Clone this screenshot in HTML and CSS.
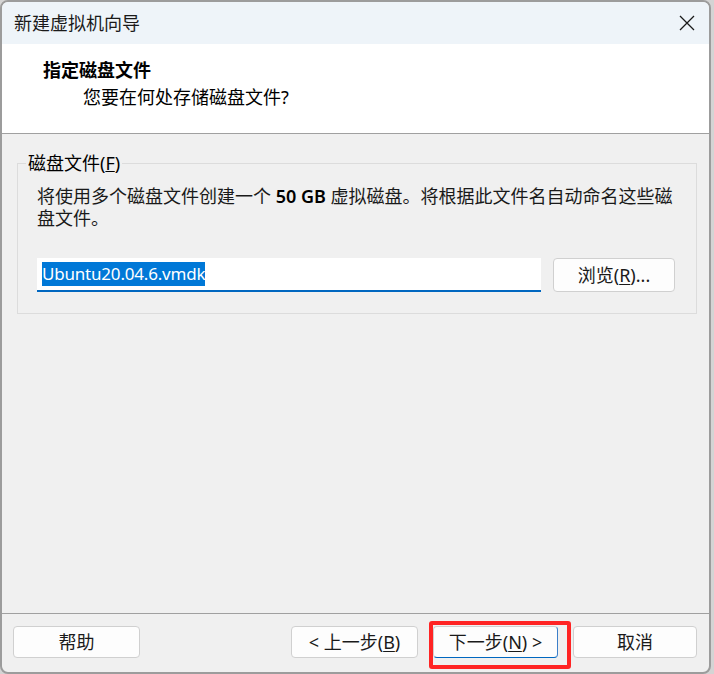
FILE: index.html
```html
<!DOCTYPE html>
<html lang="zh-CN">
<head>
    <meta charset="UTF-8">
    <title>新建虚拟机向导</title>
    <link rel="stylesheet" href="styles.css">
</head>
<body>
    <div class="okno">
        <div class="titulek">
            <span>新建虚拟机向导</span>
            <svg class="zavrit" width="16" height="16" viewBox="0 0 16 16">
                <path d="M1 1 L15 15 M15 1 L1 15" stroke="#1a1a1a" stroke-width="1.3" fill="none"/>
            </svg>
        </div>
        <div class="hlavicka">
            <div class="nadpis">指定磁盘文件</div>
            <div class="podnadpis">您要在何处存储磁盘文件?</div>
        </div>
        <div class="obsah">
            <fieldset class="skupina">
                <legend>磁盘文件(<u>F</u>)</legend>
                <p class="popis">将使用多个磁盘文件创建一个 <b>50 GB</b> 虚拟磁盘。将根据此文件名自动命名这些磁盘文件。</p>
                <div class="radek">
                    <div class="vstup"><span class="vyber">Ubuntu20.04.6.vmdk</span></div>
                    <button class="tlacitko prochazet">浏览(<u>R</u>)...</button>
                </div>
            </fieldset>
        </div>
        <div class="paticka">
            <button class="tlacitko">帮助</button>
            <div class="navigace">
                <button class="tlacitko">&lt; 上一步(<u>B</u>)</button>
                <button class="tlacitko vychozi">下一步(<u>N</u>) &gt;</button>
                <button class="tlacitko zrusit">取消</button>
            </div>
            <div class="zvyrazneni"></div>
        </div>
    </div>
</body>
</html>
```

FILE: styles.css
```css
body {
    margin: 0;
    background-color: #d4d4d4;
    font-family: "Noto Sans", "Noto Sans CJK SC", sans-serif;
    font-size: 18px;
    color: #1a1a1a;
}
.okno {
    width: 711px;
    height: 674px;
    box-sizing: border-box;
    border: 2px solid #9c9c9c;
    border-radius: 8px;
    overflow: hidden;
    background-color: #f0f0f0;
    display: flex;
    flex-direction: column;
}
.titulek {
    height: 42px;
    background-color: #eef4f9;
    display: flex;
    align-items: center;
    justify-content: space-between;
    padding: 0 14px 0 12px;
    flex-shrink: 0;
}
.titulek span {
    line-height: 24px;
}
.zavrit {
    display: block;
}
.hlavicka {
    height: 90px;
    box-sizing: border-box;
    background-color: #ffffff;
    border-bottom: 1px solid #a0a0a0;
    padding-top: 14px;
    flex-shrink: 0;
}
.nadpis {
    margin-left: 41px;
    line-height: 24px;
    font-weight: bold;
    color: #000;
}
.podnadpis {
    margin-left: 81px;
    margin-top: 3px;
    line-height: 24px;
    color: #000;
}
.obsah {
    flex: 1;
    padding-top: 19px;
}
.skupina {
    margin: 0 12px 0 15px;
    border: 1px solid #dcdcdc;
    padding: 0 19px 21px 19px;
}
.skupina legend {
    padding: 0 2px;
    margin-left: -11px;
    line-height: 20px;
    color: #000;
}
.popis {
    margin: 12px 0 0 0;
    line-height: 22px;
}
.popis b {
    font-weight: 600;
    color: #000;
}
.radek {
    display: flex;
    gap: 12px;
    margin-top: 29px;
    margin-right: 2px;
}
.vstup {
    width: 504px;
    height: 34px;
    box-sizing: border-box;
    background-color: #fff;
    border-bottom: 2px solid #0067c0;
    padding: 3px 5px 0 5px;
}
.vyber {
    display: inline-block;
    background-color: #0078d7;
    color: #fff;
    font-size: 17px;
    letter-spacing: -0.2px;
    line-height: 24px;
}
.tlacitko {
    font-family: "Noto Sans", "Noto Sans CJK SC", sans-serif;
    font-size: 18px;
    color: #1a1a1a;
    background-color: #fdfdfd;
    border: 1px solid #d0d0d0;
    border-radius: 4px;
    height: 32px;
    width: 127px;
    padding: 0;
    line-height: 30px;
}
.tlacitko u {
    text-underline-offset: 2px;
}
.prochazet {
    width: 122px;
    height: 34px;
}
.vychozi {
    width: 125px;
    border-color: #d0d0d0 #3c7fc9 #0067c0 #d0d0d0;
}
.zrusit {
    width: 124px;
}
.paticka {
    position: relative;
    height: 59px;
    box-sizing: border-box;
    border-top: 1px solid #a0a0a0;
    display: flex;
    align-items: flex-start;
    justify-content: space-between;
    padding: 12px 12px 0 11px;
    flex-shrink: 0;
}
.navigace {
    display: flex;
    gap: 15px;
}
.zvyrazneni {
    position: absolute;
    left: 427px;
    top: 7px;
    width: 142px;
    height: 48px;
    box-sizing: border-box;
    border: 4px solid #ff2424;
    border-radius: 3px;
}
```
